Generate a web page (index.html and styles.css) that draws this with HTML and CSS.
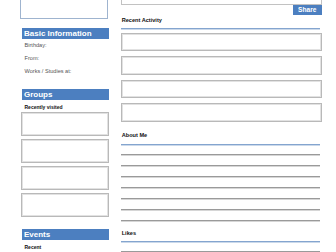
FILE: index.html
```html
<!DOCTYPE html>
<html>
<head>
<meta charset="utf-8">
<link rel="stylesheet" href="styles.css">
</head>
<body>
<div class="page">
  <aside class="left">
    <div class="photo"></div>
    <div class="hdr hdr-basic">Basic Information</div>
    <div class="info">
      <div>Birthday:</div>
      <div>From:</div>
      <div>Works / Studies at:</div>
    </div>
    <div class="hdr hdr-groups">Groups</div>
    <div class="sub">Recently visited</div>
    <div class="gboxes">
      <div class="gbox"></div>
      <div class="gbox"></div>
      <div class="gbox"></div>
      <div class="gbox"></div>
    </div>
    <div class="hdr hdr-events">Events</div>
    <div class="sub">Recent</div>
  </aside>
  <main class="main">
    <div class="topbox"></div>
    <div class="share-row"><div class="share">Share</div></div>
    <div class="title t-activity">Recent Activity</div>
    <div class="bline"></div>
    <div class="aboxes">
      <div class="abox"></div>
      <div class="abox"></div>
      <div class="abox"></div>
      <div class="abox"></div>
    </div>
    <div class="title t-about">About Me</div>
    <div class="bline b-about"></div>
    <div class="glines">
      <div class="gline"></div>
      <div class="gline"></div>
      <div class="gline"></div>
      <div class="gline"></div>
      <div class="gline"></div>
      <div class="gline"></div>
      <div class="gline"></div>
    </div>
    <div class="title t-likes">Likes</div>
    <div class="bline b-likes"></div>
    <div class="gline g-likes"></div>
  </main>
</div>
</body>
</html>
```
FILE: styles.css
```css
* { box-sizing: border-box; }
html, body {
  margin: 0;
  padding: 0;
  background: #ffffff;
  width: 336px;
  height: 252px;
  overflow: hidden;
}
body {
  font-family: "Liberation Sans", Arial, sans-serif;
  color: #111;
}
.page {
  display: flex;
  align-items: flex-start;
  padding-left: 21px;
}
.left {
  width: 87.5px;
  display: flex;
  flex-direction: column;
}
.photo {
  height: 19px;
  border: 1px solid #9fb4cf;
  border-top: none;
  margin-left: -1px;
  margin-right: 1px;
}
.hdr {
  height: 11px;
  line-height: 11px;
  background: #4c7fc0;
  color: #fff;
  font-weight: bold;
  font-size: 8px;
  padding-left: 2px;
  margin-left: 1px;
  white-space: nowrap;
}
.hdr-basic { margin-top: 9px; }
.info {
  font-size: 5.6px;
  line-height: 13px;
  color: #555;
  padding-left: 3.5px;
  padding-top: 0.3px;
}
.hdr-groups { margin-top: 10.7px; }
.sub {
  font-size: 5px;
  font-weight: bold;
  line-height: 10px;
  margin-top: 2px;
  padding-left: 3.5px;
  color: #111;
}
.gboxes {
  display: flex;
  flex-direction: column;
  gap: 3px;
}
.gbox {
  height: 24px;
  border: 1px solid #b9b9b9;
  box-shadow: inset 0 0 0 1px #e2e2e2;
}
.hdr-events { margin-top: 12px; }

.main {
  margin-left: 12.5px;
  width: 201px;
  display: flex;
  flex-direction: column;
}
.topbox {
  height: 5px;
  border: 1px solid #c2c2c2;
  border-top: none;
}
.share-row {
  display: flex;
  justify-content: flex-end;
}
.share {
  width: 29.5px;
  height: 10.3px;
  line-height: 10.3px;
  background: #4c7fc0;
  color: #fff;
  font-weight: bold;
  font-size: 6.6px;
  text-align: center;
}
.title {
  font-size: 5.6px;
  font-weight: bold;
  line-height: 11px;
  color: #111;
  padding-left: 0.7px;
}
.bline {
  margin-top: 2px;
  height: 1px;
  background: #84a5cf;
  box-shadow: 0 1px 0 #cbd9ea;
  margin-right: 2px;
}
.aboxes {
  margin-top: 3.7px;
  display: flex;
  flex-direction: column;
  gap: 5px;
}
.abox {
  height: 18.5px;
  border: 1px solid #b9b9b9;
  box-shadow: inset 0 0 0 1px #e2e2e2;
}
.t-about { margin-top: 7.8px; }
.b-about { margin-top: 3.5px; }
.glines {
  display: flex;
  flex-direction: column;
  gap: 10px;
  margin-top: 9px;
}
.gline {
  height: 1px;
  background: #9a9a9a;
  box-shadow: 0 1px 0 #d6d6d6;
  margin-right: 2px;
}
.t-likes { margin-top: 6.7px; }
.b-likes { margin-top: 1.7px; }
.g-likes { margin-top: 9px; }
```
